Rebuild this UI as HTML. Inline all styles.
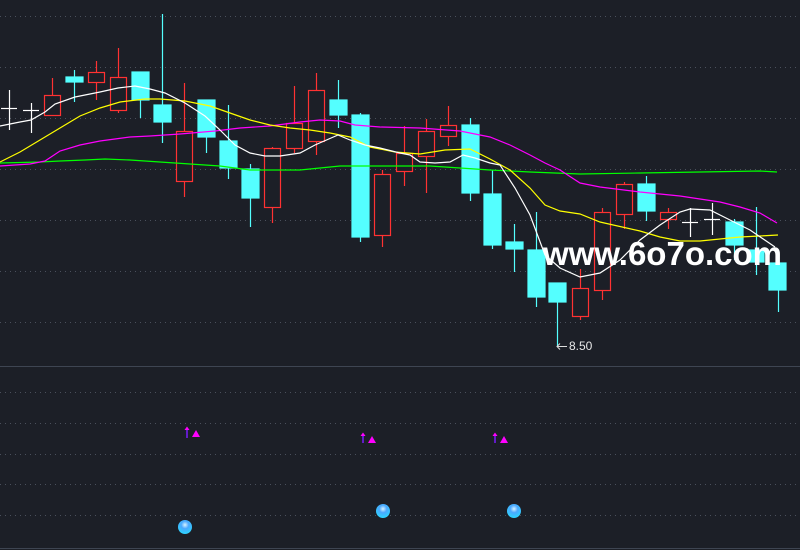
<!DOCTYPE html>
<html><head><meta charset="utf-8"><style>
html,body{margin:0;padding:0;background:#1c1f27;width:800px;height:550px;overflow:hidden}
svg{display:block}
</style></head><body>
<svg width="800" height="550" xmlns="http://www.w3.org/2000/svg">
<rect width="800" height="550" fill="#1c1f27"/>
<g stroke="#4a505c" stroke-width="1" stroke-dasharray="1,4">
<line x1="0" y1="16.5" x2="800" y2="16.5"/><line x1="0" y1="67.5" x2="800" y2="67.5"/>
<line x1="0" y1="118.5" x2="800" y2="118.5"/><line x1="0" y1="169.5" x2="800" y2="169.5"/>
<line x1="0" y1="220.5" x2="800" y2="220.5"/><line x1="0" y1="271.5" x2="800" y2="271.5"/>
<line x1="0" y1="322.5" x2="800" y2="322.5"/>
<line x1="0" y1="392.5" x2="800" y2="392.5"/><line x1="0" y1="423.5" x2="800" y2="423.5"/>
<line x1="0" y1="454.5" x2="800" y2="454.5"/><line x1="0" y1="484.5" x2="800" y2="484.5"/>
<line x1="0" y1="515.5" x2="800" y2="515.5"/>
</g>
<line x1="0" y1="366.5" x2="800" y2="366.5" stroke="#3e4552"/>
<line x1="0" y1="548.5" x2="800" y2="548.5" stroke="#3e4552"/>

<!-- crosses -->
<g stroke="#fff" stroke-width="1.2">
<line x1="1" y1="108.5" x2="17" y2="108.5"/><line x1="9.5" y1="90" x2="9.5" y2="130"/>
<line x1="23" y1="110.5" x2="39" y2="110.5"/><line x1="31.5" y1="103" x2="31.5" y2="133"/>
<line x1="682" y1="222.5" x2="698" y2="222.5"/><line x1="690.5" y1="208" x2="690.5" y2="237"/>
<line x1="704" y1="219.5" x2="720" y2="219.5"/><line x1="712.5" y1="203" x2="712.5" y2="235"/>
</g>

<!-- red candles -->
<g stroke="#ff3232" stroke-width="1.2" fill="#1c1f27">
<line x1="52.5" y1="78" x2="52.5" y2="115"/><rect x="44.5" y="95.5" width="16" height="20"/>
<line x1="96.5" y1="61" x2="96.5" y2="100"/><rect x="88.5" y="72.5" width="16" height="10"/>
<line x1="118.5" y1="48" x2="118.5" y2="113"/><rect x="110.5" y="77.5" width="16" height="33"/>
<line x1="184.5" y1="83" x2="184.5" y2="197"/><rect x="176.5" y="131.5" width="16" height="50"/>
<line x1="272.5" y1="147" x2="272.5" y2="223"/><rect x="264.5" y="148.5" width="16" height="59"/>
<line x1="294.5" y1="86" x2="294.5" y2="153"/><rect x="286.5" y="123.5" width="16" height="25"/>
<line x1="316.5" y1="73" x2="316.5" y2="155"/><rect x="308.5" y="90.5" width="16" height="51"/>
<line x1="382.5" y1="170" x2="382.5" y2="247"/><rect x="374.5" y="174.5" width="16" height="61"/>
<line x1="404.5" y1="126" x2="404.5" y2="186"/><rect x="396.5" y="153.5" width="16" height="18"/>
<line x1="426.5" y1="119" x2="426.5" y2="193"/><rect x="418.5" y="131.5" width="16" height="25"/>
<line x1="448.5" y1="106" x2="448.5" y2="146"/><rect x="440.5" y="125.5" width="16" height="11"/>
<line x1="580.5" y1="269" x2="580.5" y2="320"/><rect x="572.5" y="288.5" width="16" height="28"/>
<line x1="602.5" y1="208" x2="602.5" y2="300"/><rect x="594.5" y="212.5" width="16" height="78"/>
<line x1="624.5" y1="182" x2="624.5" y2="229"/><rect x="616.5" y="184.5" width="16" height="30"/>
<line x1="668.5" y1="208" x2="668.5" y2="229"/><rect x="660.5" y="212.5" width="16" height="7"/>
</g>

<!-- cyan candles -->
<g stroke="#54ffff" stroke-width="1.2" fill="#54ffff">
<line x1="74.5" y1="70" x2="74.5" y2="102"/><rect x="66" y="77" width="17" height="5"/>
<line x1="140.5" y1="72" x2="140.5" y2="118"/><rect x="132" y="72" width="17" height="28"/>
<line x1="162.5" y1="14" x2="162.5" y2="143"/><rect x="154" y="105" width="17" height="17"/>
<line x1="206.5" y1="100" x2="206.5" y2="153"/><rect x="198" y="100" width="17" height="37"/>
<line x1="228.5" y1="105" x2="228.5" y2="179"/><rect x="220" y="141" width="17" height="27"/>
<line x1="250.5" y1="164" x2="250.5" y2="227"/><rect x="242" y="169" width="17" height="29"/>
<line x1="338.5" y1="80" x2="338.5" y2="128"/><rect x="330" y="100" width="17" height="15"/>
<line x1="360.5" y1="113" x2="360.5" y2="242"/><rect x="352" y="115" width="17" height="122"/>
<line x1="470.5" y1="118" x2="470.5" y2="201"/><rect x="462" y="125" width="17" height="68"/>
<line x1="492.5" y1="170" x2="492.5" y2="249"/><rect x="484" y="194" width="17" height="51"/>
<line x1="514.5" y1="224" x2="514.5" y2="272"/><rect x="506" y="242" width="17" height="7"/>
<line x1="536.5" y1="212" x2="536.5" y2="307"/><rect x="528" y="250" width="17" height="47"/>
<line x1="557.5" y1="302" x2="557.5" y2="347"/><rect x="549" y="283" width="17" height="19"/>
<line x1="646.5" y1="176" x2="646.5" y2="221"/><rect x="638" y="184" width="17" height="27"/>
<line x1="734.5" y1="219" x2="734.5" y2="260"/><rect x="726" y="222" width="17" height="23"/>
<line x1="756.5" y1="207" x2="756.5" y2="275"/><rect x="749" y="250" width="15" height="12"/>
<line x1="778.5" y1="290" x2="778.5" y2="312"/><rect x="769" y="263" width="17" height="27"/>
</g>

<!-- MAs -->
<g fill="none" stroke-width="1.2">
<polyline stroke="#00ff00" points="0,163 40,162 60,161 85,160 105,159 130,160 160,162 190,164 220,166 250,170 300,170 340,166 400,166 430,166 460,168 490,170 530,172 580,174 640,173 700,172 760,171 777,172"/>
<polyline stroke="#ff00ff" points="0,166 30,164 45,161 60,151 80,145 100,141 130,137 150,136 180,134 215,131 240,128 270,126 300,122 320,120 340,121 355,125 380,127 420,128 460,131 490,137 510,145 530,155 545,163 560,170 580,183 600,187 640,192 680,196 700,199 720,202 740,207 760,213 777,223"/>
<polyline stroke="#ffff00" points="0,162 20,152 40,140 60,128 80,116 100,108 120,102 145,99 160,99 185,101 210,106 230,113 250,120 270,125 290,128 310,130 330,133 350,137 370,147 395,152 420,154 445,150 470,149 490,159 510,170 530,188 545,205 560,211 580,214 600,222 640,231 660,237 680,241 700,241 720,239 740,237 760,236 778,235"/>
<polyline stroke="#ffffff" points="0,126 20,122 31,120 45,112 55,104 75,97 100,92 118,88 135,86 150,89 165,93 185,103 205,116 220,130 235,145 250,153 265,156 280,156 300,153 315,145 338,135 350,140 365,145 380,148 400,153 410,155 420,162 435,163 450,162 463,155 475,158 490,163 500,165 515,188 530,215 545,255 560,268 580,277 600,273 620,260 640,240 660,225 680,212 690,209 710,210 730,220 750,230 775,247"/>
</g>

<!-- low label -->
<line x1="557" y1="346.5" x2="567" y2="346.5" stroke="#ddd" stroke-width="1"/>
<polyline points="560,343.5 557,346.5 560,349.5" fill="none" stroke="#ddd"/>
<text x="569" y="350" font-family="Liberation Sans, sans-serif" font-size="12" fill="#e8e8e8">8.50</text>

<!-- watermark -->
<text x="543" y="265" font-family="Liberation Sans, sans-serif" font-weight="bold" font-size="33" fill="#ffffff">www.6o7o.com</text>

<!-- lower panel signals -->
<defs>
<radialGradient id="b" cx="50%" cy="35%" r="60%">
<stop offset="0" stop-color="#d8f4ff"/><stop offset="0.45" stop-color="#4aa8ff"/><stop offset="1" stop-color="#2fd0ff"/>
</radialGradient>
</defs>
<g font-family="Liberation Sans, sans-serif" font-size="11">
<g stroke="#7a1cff" stroke-width="1.5"><line x1="187" y1="428" x2="187" y2="438"/><line x1="363" y1="434" x2="363" y2="443"/><line x1="495" y1="434" x2="495" y2="443"/></g>
<g fill="#ff00ff"><polygon points="184.5,430 187,426.5 189.5,430"/><polygon points="360.5,436 363,432.5 365.5,436"/><polygon points="492.5,436 495,432.5 497.5,436"/>
<polygon points="192,437 196,430 200,437"/><polygon points="368,443 372,436 376,443"/><polygon points="500,443 504,436 508,443"/></g>
</g>
<circle cx="185" cy="527" r="7" fill="url(#b)"/>
<circle cx="383" cy="511" r="7" fill="url(#b)"/>
<circle cx="514" cy="511" r="7" fill="url(#b)"/>
</svg>
</body></html>
